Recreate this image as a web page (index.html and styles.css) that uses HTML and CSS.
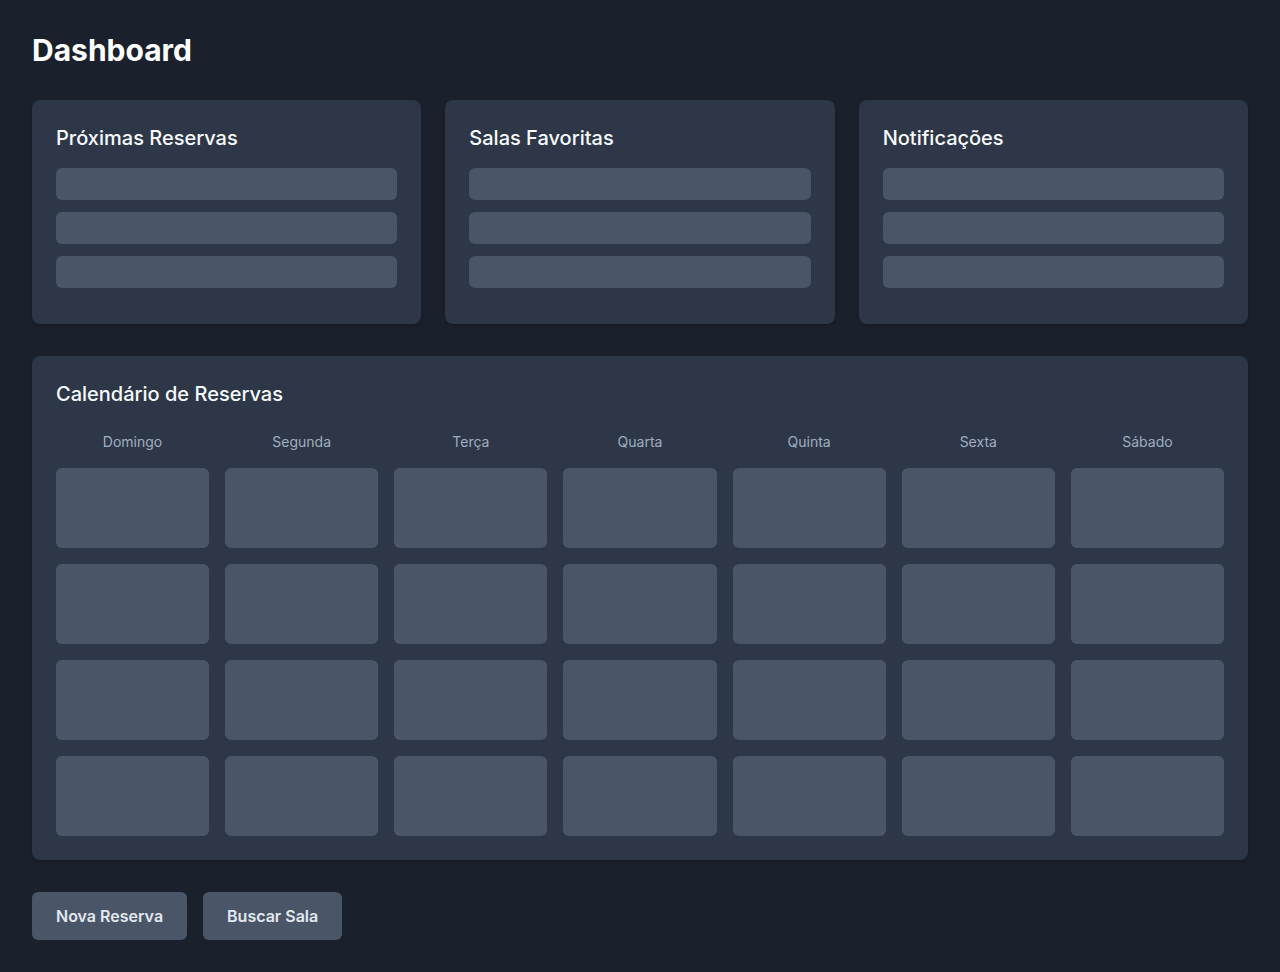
FILE: index.html
```html
<!DOCTYPE html>
<html lang="pt">
<head>
<meta charset="utf-8">
<title>Dashboard</title>
<link rel="stylesheet" href="styles.css">
</head>
<body>
<main class="page">
  <h1 class="page-title">Dashboard</h1>
  <section class="cards">
    <div class="card">
      <h2 class="card-title">Próximas Reservas</h2>
      <div class="bar"></div><div class="bar"></div><div class="bar"></div>
    </div>
    <div class="card">
      <h2 class="card-title">Salas Favoritas</h2>
      <div class="bar"></div><div class="bar"></div><div class="bar"></div>
    </div>
    <div class="card">
      <h2 class="card-title">Notificações</h2>
      <div class="bar"></div><div class="bar"></div><div class="bar"></div>
    </div>
  </section>
  <section class="card calendar">
    <h2 class="card-title cal-title">Calendário de Reservas</h2>
    <div class="cal-grid">
      <div class="day">Domingo</div><div class="day">Segunda</div><div class="day">Terça</div><div class="day">Quarta</div><div class="day">Quinta</div><div class="day">Sexta</div><div class="day">Sábado</div>
      <div class="cell"></div><div class="cell"></div><div class="cell"></div><div class="cell"></div><div class="cell"></div><div class="cell"></div><div class="cell"></div>
      <div class="cell"></div><div class="cell"></div><div class="cell"></div><div class="cell"></div><div class="cell"></div><div class="cell"></div><div class="cell"></div>
      <div class="cell"></div><div class="cell"></div><div class="cell"></div><div class="cell"></div><div class="cell"></div><div class="cell"></div><div class="cell"></div>
      <div class="cell"></div><div class="cell"></div><div class="cell"></div><div class="cell"></div><div class="cell"></div><div class="cell"></div><div class="cell"></div>
    </div>
  </section>
  <div class="actions">
    <button class="btn">Nova Reserva</button>
    <button class="btn">Buscar Sala</button>
  </div>
</main>
</body>
</html>
```
FILE: styles.css
```css
* { box-sizing: border-box; }
html, body { margin: 0; padding: 0; }
body {
  background: #1a202c;
  color: #f7fafc;
  font-family: Inter, "Noto Sans", sans-serif;
  min-height: 972px;
}
.page { padding: 32px; }
.page-title {
  margin: 0 0 32px;
  font-size: 30px;
  line-height: 36px;
  font-weight: 700;
  color: #ffffff;
}
.cards {
  display: grid;
  grid-template-columns: repeat(3, 1fr);
  gap: 24px;
  margin-bottom: 32px;
}
.card {
  background: #2d3748;
  border-radius: 8px;
  padding: 24px;
  box-shadow: 0 1px 3px rgba(0,0,0,0.2);
}
.card-title {
  margin: 0 0 16px;
  font-size: 20px;
  line-height: 28px;
  font-weight: 500;
  color: #f7fafc;
}
.bar {
  height: 32px;
  background: #4a5568;
  border-radius: 6px;
  margin-bottom: 12px;
}
.cal-title { margin-bottom: 24px; }
.cal-grid {
  display: grid;
  grid-template-columns: repeat(7, 1fr);
  gap: 16px;
}
.day {
  text-align: center;
  font-size: 14px;
  line-height: 20px;
  color: #a0aec0;
}
.cell {
  height: 80px;
  background: #4a5568;
  border-radius: 6px;
}
.actions {
  display: flex;
  gap: 16px;
  margin-top: 32px;
}
.btn {
  background: #4a5568;
  color: #e2e8f0;
  border: none;
  border-radius: 6px;
  padding: 12px 24px;
  font-family: Inter, "Noto Sans", sans-serif;
  font-size: 16px;
  line-height: 24px;
  font-weight: 600;
  cursor: pointer;
}
```
